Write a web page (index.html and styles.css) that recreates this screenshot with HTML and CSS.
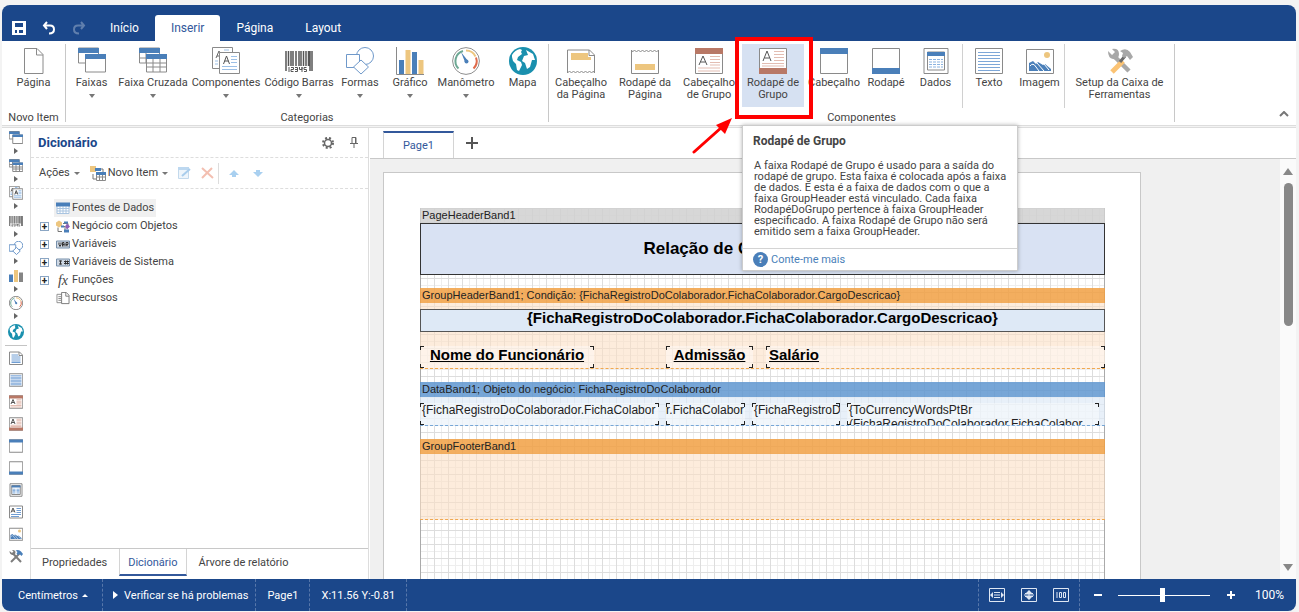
FILE: index.html
```html
<!DOCTYPE html>
<html lang="pt-br">
<head>
  <meta charset="UTF-8" />
  <meta name="viewport" content="width=device-width, initial-scale=1.0" />
  <title>Designer de Relatórios</title>
  <link rel="stylesheet" href="styles.css">
</head>
<body>
  <!-- icons -->
  <svg class="sprite" aria-hidden="true">
    <symbol id="i-page" viewBox="0 0 28 28"><path d="M4.500 1.500h12.500l6 6v19H4.500z M16.500 1.500v6.500h6.500" fill="#fff" stroke="#8a8a8a"/></symbol>
    <symbol id="i-bands" viewBox="0 0 28 28"><path d="M.5 1h20v15H.5z" fill="#fff" stroke="#8a8a8a"/><path d="M0 1h21v5H0z" fill="#4a7fb9"/><path d="M7.500 8h20v17h-20z" fill="#fff" stroke="#8a8a8a"/><path d="M7 7h21v5H7z" fill="#4a7fb9"/></symbol>
    <symbol id="i-cross" viewBox="0 0 28 28"><path d="M.5 1h20v15H.5z M.5 11h20 M7 5v11" fill="#fff" stroke="#8a8a8a"/><path d="M0 1h21v5H0z" fill="#4a7fb9"/><path d="M7.500 8h20v17h-20z M7.500 16h20 M7.500 20h20 M14 12v13 M21 12v13" fill="#fff" stroke="#8a8a8a"/><path d="M7 7h21v5H7z" fill="#4a7fb9"/></symbol>
    <symbol id="i-comps" viewBox="0 0 28 28"><path d="M.5 .5h20v21H.5z" fill="#fff" stroke="#8a8a8a"/><path d="M4 11L7 4l3 7M5 9h4" fill="none" stroke="#666"/><path d="M3 14h3M3 17h3M12 3h5" stroke="#9dc0e6"/><path d="M7.500 5.500h20v21h-20z" fill="#fff" stroke="#8a8a8a"/><path d="M11.500 17l3-8 3 8M12.500 14h4" fill="none" stroke="#555"/><path d="M19 9.500h6M19 12.500h6M19 15.500h6M10 19.500h15M10 22.500h15" stroke="#9dc0e6"/></symbol>
    <symbol id="i-barcode" class="scaled" viewBox="0 0 28 28"><path d="M1 4v20M3.500 4v15M6 4v15M8 4v15M11 4v15M14 4v15M16 4v15M18.500 4v15M21 4v15M23.500 4v15M25 4v20M27 4v20" stroke="#555" stroke-width="1.500"/><path d="M4 20v5M6 20.500h2.500v2H6v2h2.500M10 20.500h2.500v4H10M10 22.500h2.500M14.500 20v2.500h2.500v-2.500v5M21.500 20.500H19v2h2.500v2H19" fill="none" stroke="#555"/></symbol>
    <symbol id="i-shapes" viewBox="0 0 28 28"><circle cx="19" cy="9" r="8.500" fill="#fff" stroke="#6f99ca"/><path d="M.5 7.500h13v13H.5z" fill="#fff" stroke="#6f99ca"/><path d="M15 13l7.500 7-7.500 7-7.500-7z" fill="#fff" stroke="#6f99ca"/></symbol>
    <symbol id="i-chart" viewBox="0 0 28 28"><path d="M.5 0v27.500H28" fill="none" stroke="#8a8a8a"/><path d="M3 13h5v14H3zM16 5h5v22h-5z" fill="#4a7fb9"/><path d="M9.500 3h5v24h-5zM22.500 13h5v14h-5z" fill="#edc67f"/></symbol>
    <symbol id="i-gauge" viewBox="0 0 28 28"><circle cx="14" cy="14" r="13.400" fill="#fff" stroke="#8f8f8f"/><g class="dial" fill="none" stroke-width="2"><path d="M6.500 21.500A10.500 10.500 0 0 1 11 4" stroke="#6da894"/><path d="M14 3.500a10.500 10.500 0 0 1 9.500 6" stroke="#edc67f"/><path d="M24 10.500a10.500 10.500 0 0 1-2.500 11" stroke="#df6b4c"/></g><path d="M9 5l7 9-3 1z" fill="#4a7fb9"/><circle cx="14.500" cy="14.500" r="2" fill="#4a7fb9"/></symbol>
    <symbol id="i-map" viewBox="0 0 28 28"><circle cx="14" cy="14" r="14" fill="#1a90ae"/><path d="M3 8q3-5 8-6l2 1-1 2 1 2-4 3-1 3 4 2 1 3-3 6-2-1-1-6-3-3-1-4zM17 3l7 4 2 6-3 0-2 7-3 2-2-6-3-2 2-5 4-1z" fill="#fff"/></symbol>
    <symbol id="i-phead" viewBox="0 0 28 28"><path d="M.5 26V3h22l5 5v18M22 3v5.500h5.500" fill="#fff" stroke="#8a8a8a"/><path d="M.5 26l2-2 2 2 2-2 2 2 2-2 2 2 2-2 2 2 2-2 2 2 2-2 2 2 2-2 1 2" fill="none" stroke="#8a8a8a"/><path d="M4 6h17v4h3v3H4z" fill="#edc67f"/></symbol>
    <symbol id="i-pfoot" viewBox="0 0 28 28"><path d="M.5 3v23.500h27V3l-2 2-2-2-2 2-2-2-2 2-2-2-2 2-2-2-2 2-2-2-2 2-2-2-2 2z" fill="#fff" stroke="#8a8a8a"/><path d="M4 17h20v6H4z" fill="#edc67f"/></symbol>
    <symbol id="i-ghead" viewBox="0 0 28 28"><path d="M.5 1.500h27v25H.5z" fill="#fff" stroke="#8a8a8a"/><path d="M0 1h28v6H0z" fill="#b87866"/><path d="M4 18l4-9 4 9M5.500 15h5" fill="none" stroke="#555"/><path d="M15 9.500h10M15 12.500h10M15 15.500h10M15 18h10M3 21h22M3 24h22" stroke="#e3bdb2"/></symbol>
    <symbol id="i-gfoot" viewBox="0 0 28 28"><path d="M.5 1.500h27v25H.5z" fill="#fff" stroke="#8a8a8a"/><path d="M0 21h28v6H0z" fill="#b87866"/><path d="M4 14l4-10 4 10M5.500 11h5" fill="none" stroke="#555"/><path d="M15 4.500h10M15 7.500h10M15 10.500h10M15 13.500h10M3 16.500h22M3 19h22" stroke="#e3bdb2"/></symbol>
    <symbol id="i-head" viewBox="0 0 28 28"><path d="M.5 1.500h27v25H.5z" fill="#fff" stroke="#8a8a8a"/><path d="M0 1h28v6H0z" fill="#4a7fb9"/></symbol>
    <symbol id="i-foot" viewBox="0 0 28 28"><path d="M.5 1.500h27v25H.5z" fill="#fff" stroke="#8a8a8a"/><path d="M0 21h28v6H0z" fill="#4a7fb9"/></symbol>
    <symbol id="i-data" viewBox="0 0 28 28"><path d="M2 1.500h24v25H2z" fill="#fff" stroke="#8a8a8a"/><path d="M5.500 5h17v18h-17z" fill="#fff" stroke="#8a8a8a"/><path d="M5 5h18v4H5z" fill="#4a7fb9"/><path d="M7 12.500h14M7 15h14M7 17.500h14M7 20h14" stroke="#8bb3e0" stroke-dasharray="3 1"/></symbol>
    <symbol id="i-text" viewBox="0 0 28 28"><path d="M.5 1.500h27v25H.5z" fill="#fff" stroke="#8a8a8a"/><path d="M3 5.500h22M3 8.500h22M3 11.500h22M3 14.500h22M3 17.500h22M3 20.500h22M3 23.500h22" stroke="#7da7d8"/></symbol>
    <symbol id="i-page-text" viewBox="0 0 28 28"><path d="M1 27V2h20l6 6v19zM20 2v7h7" fill="#fff" stroke="#8a8a8a"/><path d="M5 8h13M5 12h18M5 16h18M5 20h18M5 23h18" stroke="#6f9dd3"/></symbol>
    <symbol id="i-image" viewBox="0 0 28 28"><path d="M.5 2.500h27v24H.5z" fill="#fff" stroke="#8a8a8a"/><circle cx="21" cy="8" r="3" fill="#edc67f"/><path d="M3 24v-8l4-2 3 3 2-2 5 3 2-1 6 5v2z" fill="#4a7fb9"/><path class="dial" d="M4 19q3-4 6 1l3 4M11 16l7 8M18 17l5 6" fill="none" stroke="#fff"/></symbol>
    <symbol id="i-tools" class="scaled" viewBox="0 0 28 28"><path d="M9 10l14 14" stroke="#a8a8a8" stroke-width="4.500"/><path d="M6 25L17 14" stroke="#fbc374" stroke-width="5"/><path d="M14 15l5-6" stroke="#6b6b6b" stroke-width="3"/><path d="M2 4l4 4 3-3-3-3q7-1 7 5t-6 5q-5-1-5-8zM14 4q6-4 10 1l3 5-3 3-3-4-3 2-2-2 1-3z" fill="#a8a8a8"/></symbol>
    <symbol id="i-tools-sm" class="scaled" viewBox="0 0 28 28"><path d="M7 8l17 18" stroke="#7d7d7d" stroke-width="4"/><path d="M4 26L21 9" stroke="#7d7d7d" stroke-width="4"/><path d="M1 4l5 4 3-3-3-3q7-1 7 5t-6 5q-6-1-6-8z" fill="#7d7d7d"/><path d="M13 3q7-3 11 2l4 5-3 4-4-4-3 2-3-3 2-3z" fill="#4a7fb9"/></symbol>
    <symbol id="i-texta" viewBox="0 0 28 28"><path d="M1 2h26v24H1z" fill="#fff" stroke="#8a8a8a"/><path d="M4 15l4-9 4 9M6 12h5" fill="none" stroke="#555"/><path d="M15 7h9M15 11h9M15 15h9M4 19h20M4 23h16" stroke="#6f9dd3"/></symbol>
    <symbol id="i-chart-sm" viewBox="0 0 28 28"><path d="M0 11h8v15H0z" fill="#4a7fb9"/><path d="M10 2h8v24h-8z" fill="#edc67f"/><path d="M20 7h8v19h-8z" fill="#858585"/></symbol>
  </svg>

  <div class="app">
    <header class="topbar">
      <button class="quick" title="Salvar"><svg width="14" height="14" viewBox="0 0 14 14"><path d="M0 0h14v14H0zM3 2v4h8V2zM3 9v3h2V9zM7 9v3h4V9z" fill="#fff" fill-rule="evenodd"/></svg></button>
      <button class="quick" title="Desfazer"><svg width="14" height="14" viewBox="0 0 14 14"><path d="M5 1L2 4.500 5 8M2 4.500h6q4 0 4 4t-5 4" fill="none" stroke="#fff" stroke-width="2"/></svg></button>
      <button class="quick off" title="Refazer"><svg width="14" height="14" viewBox="0 0 14 14"><path d="M9 1l3 3.500L9 8M12 4.500H6q-4 0-4 4t5 4" fill="none" stroke="#fff" stroke-width="2"/></svg></button>
      <nav class="menu">
        <a href="#inicio">Início</a>
        <a href="#inserir" class="active">Inserir</a>
        <a href="#pagina">Página</a>
        <a href="#layout">Layout</a>
      </nav>
    </header>

    <section class="ribbon">
      <div class="group group-new">
        <div class="tools">
          <button class="tool"><svg><use href="#i-page"/></svg>Página</button>
        </div>
        <div class="caption">Novo Item</div>
      </div>
      <div class="group group-cat">
        <div class="tools">
          <button class="tool drop"><svg><use href="#i-bands"/></svg>Faixas</button>
          <button class="tool drop"><svg><use href="#i-cross"/></svg>Faixa Cruzada</button>
          <button class="tool drop"><svg><use href="#i-comps"/></svg>Componentes</button>
          <button class="tool drop"><svg><use href="#i-barcode"/></svg>Código Barras</button>
          <button class="tool drop"><svg><use href="#i-shapes"/></svg>Formas</button>
          <button class="tool drop"><svg><use href="#i-chart"/></svg>Gráfico</button>
          <button class="tool drop"><svg><use href="#i-gauge"/></svg>Manômetro</button>
          <button class="tool"><svg><use href="#i-map"/></svg>Mapa</button>
        </div>
        <div class="caption">Categorias</div>
      </div>
      <div class="group group-comp">
        <div class="tools">
          <button class="tool"><svg><use href="#i-phead"/></svg>Cabeçalho<br>da Página</button>
          <button class="tool"><svg><use href="#i-pfoot"/></svg>Rodapé da<br>Página</button>
          <button class="tool"><svg><use href="#i-ghead"/></svg>Cabeçalho<br>de Grupo</button>
          <div class="hint">
            <button class="tool selected"><svg><use href="#i-gfoot"/></svg>Rodapé de<br>Grupo</button>
            <div class="highlight"></div>
            <svg class="arrow" viewBox="0 0 42 40"><path d="M2 36L30 11" stroke="#f00" stroke-width="3" stroke-linecap="round"/><path d="M40 2L24 9l9 9z" fill="#f00"/></svg>
            <div class="tooltip">
              <h4>Rodapé de Grupo</h4>
              <p>A faixa Rodapé de Grupo é usado para a saída do<br>rodapé de grupo. Esta faixa é colocada após a faixa<br>de dados. E esta é a faixa de dados com o que a<br>faixa GroupHeader está vinculado. Cada faixa<br>RodapéDoGrupo pertence à faixa GroupHeader<br>especificado. A faixa Rodapé de Grupo não será<br>emitido sem a faixa GroupHeader.</p>
              <a href="#ajuda"><span class="help">?</span>Conte-me mais</a>
            </div>
          </div>
          <button class="tool"><svg><use href="#i-head"/></svg>Cabeçalho</button>
          <button class="tool"><svg><use href="#i-foot"/></svg>Rodapé</button>
          <button class="tool split"><svg><use href="#i-data"/></svg>Dados</button>
          <button class="tool"><svg><use href="#i-text"/></svg>Texto</button>
          <button class="tool split"><svg><use href="#i-image"/></svg>Imagem</button>
          <button class="tool"><svg><use href="#i-tools"/></svg>Setup da Caixa de<br>Ferramentas</button>
        </div>
        <div class="caption">Componentes</div>
      </div>
      <button class="collapse" title="Recolher"><svg width="10" height="6" viewBox="0 0 10 6"><path d="M1 5l4-4 4 4" fill="none" stroke="#777" stroke-width="2"/></svg></button>
    </section>

    <main>
      <nav class="toolbox">
        <div class="boxes">
          <button><svg><use href="#i-bands"/></svg></button>
          <button><svg><use href="#i-cross"/></svg></button>
          <button><svg><use href="#i-comps"/></svg></button>
          <button><svg><use href="#i-barcode"/></svg></button>
          <button><svg><use href="#i-shapes"/></svg></button>
          <button><svg><use href="#i-chart-sm"/></svg></button>
          <button><svg><use href="#i-gauge"/></svg></button>
          <button class="plain"><svg><use href="#i-map"/></svg></button>
        </div>
        <div class="singles">
          <button><svg><use href="#i-page-text"/></svg></button>
          <button><svg><use href="#i-text"/></svg></button>
          <button><svg><use href="#i-ghead"/></svg></button>
          <button><svg><use href="#i-gfoot"/></svg></button>
          <button><svg><use href="#i-head"/></svg></button>
          <button><svg><use href="#i-foot"/></svg></button>
          <button><svg><use href="#i-data"/></svg></button>
          <button><svg><use href="#i-texta"/></svg></button>
          <button><svg><use href="#i-image"/></svg></button>
          <button><svg><use href="#i-tools-sm"/></svg></button>
        </div>
      </nav>

      <aside class="panel">
        <div class="panel-head">
          <h2>Dicionário</h2>
          <button title="Configurações"><svg width="12" height="12" viewBox="0 0 12 12"><circle cx="6" cy="6" r="5" fill="none" stroke="#666" stroke-width="2" stroke-dasharray="2 2"/><circle cx="6" cy="6" r="3.500" fill="none" stroke="#666" stroke-width="1.500"/></svg></button>
          <button title="Fixar"><svg width="8" height="11" viewBox="0 0 8 11"><path d="M2 .5h4v6H2zM0 6.500h8M4 7v4M5.500 1v5" fill="none" stroke="#666"/></svg></button>
        </div>
        <div class="panel-bar">
          <button>Ações<i class="down"></i></button>
          <button class="new"><svg width="16" height="15" viewBox="0 0 16 15"><path d="M0 0h6v6H0z" fill="#edc67f"/><path d="M3 8v5h3M8 3h5v3" fill="none" stroke="#777"/><path d="M6.500 7h9v7.500h-9zM6.500 11h9M9.500 9v5M12.500 9v5" fill="#fff" stroke="#8a8a8a"/><path d="M5 2h6v3H5zM6 6h10v3H6z" fill="#4a7fb9"/></svg>Novo Item<i class="down"></i></button>
          <button class="off"><svg width="13" height="12" viewBox="0 0 13 12"><path d="M.5 1.500h10v10H.5z" fill="#eef5fb" stroke="#c3d9ec"/><path d="M0 0h11v3H0z" fill="#bdd8f0"/><path d="M4 9l8-7" stroke="#a9cdec" stroke-width="2"/></svg></button>
          <button class="off del"><svg width="13" height="12" viewBox="0 0 13 12"><path d="M1 1l11 10M11 1L1 11" stroke="#f3bfb1" stroke-width="2"/></svg></button>
          <button class="off move"><svg width="10" height="7" viewBox="0 0 10 7"><path d="M5 0l5 5H7v2H3V5H0z" fill="#a9d0f0"/></svg></button>
          <button class="off move"><svg width="10" height="7" viewBox="0 0 10 7"><path d="M5 7l5-5H7V0H3v2H0z" fill="#a9d0f0"/></svg></button>
        </div>
        <ul class="tree">
          <li><span class="node current"><svg viewBox="0 0 14 12"><path d="M1 1h12v10H1zM1 6h12M1 8.500h12M4 4v7M7 4v7M10 4v7" fill="#fff" stroke="#a9c4e0"/><path d="M0 0h14v4H0z" fill="#4a7fb9"/></svg>Fontes de Dados</span></li>
          <li><button class="plus">+</button><span class="node"><svg viewBox="0 0 14 12"><path d="M2 7v4h4M7 3h5v3M6 6h3v5" fill="none" stroke="#777"/><path d="M0 2l3-2 3 2v3L3 7 0 5z" fill="#edc67f"/><path d="M8 1h4v2H8zM5 5h3v2H5z" fill="#4a7fb9"/><path d="M11 3l3 3-3 3-2-3z" fill="#8e5fb8"/><path d="M8 9h5v3H8z" fill="#4a7fb9"/></svg>Negócio com Objetos</span></li>
          <li><button class="plus">+</button><span class="node"><svg viewBox="0 0 14 12"><path d="M.5 2.500h13v7H.5z" fill="#cfd9e5" stroke="#7790ab"/><path d="M3 4v2l1 2 1-2V4M6.500 8V4h1.500v4M6.500 6h2M10 8V4h2v2h-2l2 2" fill="none" stroke="#333"/></svg>Variáveis</span></li>
          <li><button class="plus">+</button><span class="node"><svg viewBox="0 0 14 12"><path d="M.5 2.500h13v7H.5z" fill="#cfd9e5" stroke="#7790ab"/><path d="M3 4.500h3M3 7.500h3M4.500 4v4M8 5h5M8 7h5M9.500 4v4M11.500 4v4" fill="none" stroke="#333"/></svg>Variáveis de Sistema</span></li>
          <li><button class="plus">+</button><span class="node"><em>fx</em>Funções</span></li>
          <li><span class="node"><svg viewBox="0 0 14 14"><path d="M.5 2.500h7v9h-7zM2 5h3M2 7h3M2 9h3" fill="#fff" stroke="#8a8a8a"/><path d="M5.500 .5h5l3 3v9h-8zM10 .5v4h3.500" fill="#fff" stroke="#777"/></svg>Recursos</span></li>
        </ul>
        <nav class="panel-tabs">
          <a href="#propriedades">Propriedades</a>
          <a href="#dicionario" class="active">Dicionário</a>
          <a href="#arvore">Árvore de relatório</a>
        </nav>
      </aside>

      <section class="designer">
        <div class="page-tabs">
          <a href="#page1">Page1</a>
          <button title="Nova página"><svg width="12" height="12" viewBox="0 0 12 12"><path d="M6 0v12M0 6h12" stroke="#555" stroke-width="2"/></svg></button>
        </div>
        <div class="canvas">
          <div class="paper">
            <div class="sheet">
              <div class="band-title gray">PageHeaderBand1</div>
              <div class="report-title">Relação de Cargos e Salários</div>

              <div class="band orange first">
                <div class="band-title">GroupHeaderBand1; Condição: {FichaRegistroDoColaborador.FichaColaborador.CargoDescricao}</div>
                <div class="band-body">
                  <div class="group-title">{FichaRegistroDoColaborador.FichaColaborador.CargoDescricao}</div>
                  <div class="fields heads">
                    <div class="field center">Nome do Funcionário</div>
                    <div class="field center">Admissão</div>
                    <div class="field">Salário</div>
                  </div>
                </div>
              </div>

              <div class="band blue">
                <div class="band-title">DataBand1; Objeto do negócio: FichaRegistroDoColaborador</div>
                <div class="band-body fields values">
                  <div class="field">{FichaRegistroDoColaborador.FichaColabor</div>
                  <div class="field middle">r.FichaColabor</div>
                  <div class="field">{FichaRegistroD</div>
                  <div class="field">{ToCurrencyWordsPtBr<br>(FichaRegistroDoColaborador.FichaColabor</div>
                </div>
              </div>

              <div class="band orange">
                <div class="band-title">GroupFooterBand1</div>
                <div class="band-body empty"></div>
              </div>
            </div>
          </div>
          <div class="scroll"><i class="up"></i><div class="thumb"></div><i class="dn"></i></div>
        </div>
      </section>
    </main>

    <footer class="status">
      <button class="units">Centímetros<i class="up-sm"></i></button>
      <button class="check"><i class="play"></i>Verificar se há problemas</button>
      <span class="cell">Page1</span>
      <span class="cell">X:11.56 Y:-0.81</span>
      <div class="views">
        <button title="Largura"><svg width="16" height="14" viewBox="0 0 16 14"><path d="M.5 .5h15v13H.5zM5 4.500h6M5 7h6M5 9.500h6" fill="none" stroke="#dfe7f3"/><path d="M4 4v6L1 7zM12 4v6l3-3z" fill="#dfe7f3"/></svg></button>
        <button title="Página inteira"><svg width="16" height="14" viewBox="0 0 16 14"><path d="M.5 .5h15v13H.5zM3 7h10M4 5.500h8M4 8.500h8M8 4v6" fill="none" stroke="#dfe7f3"/><path d="M5 5h6L8 2zM5 9h6l-3 3z" fill="#dfe7f3"/></svg></button>
        <button title="Tamanho real"><svg width="16" height="14" viewBox="0 0 16 14"><path d="M.5 .5h15v13H.5zM4 4v6M6.500 4.500h2v5h-2zM10.500 4.500h2v5h-2z" fill="none" stroke="#dfe7f3"/></svg></button>
      </div>
      <div class="zoom">
        <button class="less" title="Diminuir"><svg width="8" height="8" viewBox="0 0 8 8"><path d="M0 4h8" stroke="#fff" stroke-width="2"/></svg></button>
        <input type="range" min="0" max="200" value="96" aria-label="Zoom">
        <button class="more" title="Aumentar"><svg width="8" height="8" viewBox="0 0 8 8"><path d="M0 4h8M4 0v8" stroke="#fff" stroke-width="2"/></svg></button>
        <span>100%</span>
      </div>
    </footer>
  </div>
</body>
</html>
```
FILE: styles.css
```css
:root {
  --blue: #1b478a;
  --accent: #4a7fb9;
  --text: #444;
  --line: #d4d4d4;
  --data: #76a6d6;
}
* { box-sizing: border-box; }
body {
  margin: 0; background: #f3f3f3; color: var(--text);
  font: 11px/14px Roboto, "Noto Sans", sans-serif;
}
button {
  margin: 0; padding: 0; border: 0; background: none;
  font: inherit; color: inherit; cursor: pointer;
}
a { color: inherit; text-decoration: none; }
svg { display: block; }
.sprite { position: absolute; width: 0; height: 0; }
/* keep 1px outlines when an icon is drawn small */
symbol path, symbol circle { vector-effect: non-scaling-stroke; }
.scaled path, .dial, .dial path { vector-effect: none; }
.app {
  display: flex; flex-direction: column; height: 100vh;
  padding: 5px 3px 1px 2px;
}

/* top bar */
.topbar {
  display: flex; align-items: flex-end; flex: none; height: 36px;
  padding-left: 9px; background: var(--blue); color: #fff;
  border-radius: 8px 8px 0 0;
}
.quick { display: flex; align-items: center; justify-content: center; width: 30px; height: 26px; padding-right: 14px; }
.quick.off { opacity: .3; }
.menu { display: flex; margin-left: -7px; font-size: 12px; }
.menu a { height: 26px; padding: 0 16px; line-height: 26px; }
.menu a.active { background: #fff; color: #33589b; border-radius: 3px 3px 0 0; }

/* ribbon */
.ribbon {
  display: flex; flex: none; height: 85px; position: relative;
  background: #fff; border-bottom: 1px solid #ddd;
}
.group {
  display: flex; flex-direction: column; justify-content: space-between;
  margin: 3px 0; border-right: 1px solid #c8c8c8; text-align: center;
}
.tools { display: grid; height: 64px; }
.group-new .tools { grid-template-columns: 63px; }
.group-cat .tools { grid-template-columns: 51px 72px 74px 72px 50px 50px 62px 51px; }
.group-comp .tools { grid-template-columns: 64px 64px 64px 64px 58px 46px 54px 52px 50px 109px; }
.tool {
  display: flex; flex-direction: column; align-items: center;
  padding-top: 3px; line-height: 12px; white-space: nowrap;
}
.tool svg { flex: none; width: 28px; height: 28px; margin-bottom: 2px; }
.tool.drop::after {
  content: ""; margin-top: 5px;
  border: 3px solid transparent; border-top: 4px solid #777; border-bottom: 0;
}
.tool.split { border-right: 1px solid #d0d0d0; }
.tool.selected { width: 62px; height: 63px; background: #d6e1f2; }
.caption { line-height: 8px; }
.collapse { position: absolute; right: 7px; bottom: 8px; }

.hint { position: relative; padding-left: 1px; }
.highlight {
  position: absolute; z-index: 4; left: -6px; top: -7px; width: 78px; height: 82px;
  border: 4px solid #f00;
}
.arrow { position: absolute; z-index: 4; left: -49px; top: 72px; width: 42px; height: 40px; }
.tooltip {
  position: absolute; z-index: 3; left: 1px; top: 81px; width: 276px;
  background: #fff; border: 1px solid #ccc; box-shadow: 0 0 4px rgba(0,0,0,.3);
  text-align: left;
}
.tooltip h4 { margin: 0; padding: 7px 10px; font-size: 12px; line-height: 16px; }
.tooltip p { margin: 0; padding: 4px 11px 11px; line-height: 11px; white-space: nowrap; }
.tooltip a {
  display: flex; align-items: center; gap: 3px; height: 22px; padding: 0 10px;
  border-top: 1px solid var(--line); color: var(--accent);
}
.help {
  width: 15px; height: 15px; border-radius: 50%; background: var(--accent);
  color: #fff; font-weight: bold; line-height: 15px; text-align: center;
}

main { display: flex; flex: 1; min-height: 0; margin-top: 1px; background: #fff; border-top: 1px solid #ddd; }

/* left tool strip */
.toolbox { flex: none; width: 29px; padding: 2px 3px 0; border-right: 1px solid #ddd; overflow: hidden; }
.toolbox button { display: flex; flex-direction: column; align-items: center; width: 22px; height: 22px; padding-top: 5px; }
.toolbox svg { flex: none; width: 14px; height: 14px; }
.boxes { padding-bottom: 6px; border-bottom: 1px solid #c4c4c4; }
.toolbox .boxes button { height: 27px; padding-top: 1px; }
.toolbox .boxes button:nth-child(odd) { height: 28px; }
.boxes button::after {
  content: ""; margin-top: 3px;
  border: 3px solid transparent; border-left: 4px solid #666; border-right: 0;
}
.toolbox .boxes button.plain { height: 16px; }
.boxes .plain svg { width: 16px; height: 16px; }
.boxes .plain::after { display: none; }

/* dictionary */
.panel { display: flex; flex-direction: column; flex: none; width: 338px; border-right: 1px solid #ddd; }
.panel-head { display: flex; align-items: center; gap: 16px; height: 30px; padding: 0 10px 0 7px; border-bottom: 1px dashed #ddd; }
.panel-head h2 { flex: 1; margin: 0; font-size: 13px; color: var(--blue); }
.panel-bar { display: flex; align-items: center; height: 31px; padding-left: 8px; border-bottom: 1px dashed #ddd; }
.panel-bar button { display: flex; align-items: center; margin-right: 10px; }
.panel-bar .new svg { margin-right: 2px; }
.panel-bar .del { height: 21px; padding-right: 4px; border-right: 1px solid #ddd; }
.panel-bar .move { margin-right: 14px; }
.down { margin-left: 4px; border: 3px solid transparent; border-top: 3px solid #777; border-bottom: 0; }
.tree { flex: 1; margin: 0; padding: 10px 0 0 9px; list-style: none; }
.tree li { display: flex; align-items: center; height: 18px; }
.plus {
  width: 9px; height: 9px; border: 1px solid #8ba6c4; color: #222;
  font-size: 10px; line-height: 7px; font-weight: bold;
}
.node { display: flex; align-items: center; height: 18px; padding: 0 2px; margin-left: 5px; }
.node:first-child { margin-left: 14px; }
.node svg, .node em { width: 14px; height: 13px; margin-right: 2px; }
.node em { font: italic 14px/13px "Liberation Serif", serif; text-align: center; }
.node.current { background: #f0f0f0; }
.panel-tabs { display: flex; height: 31px; border-top: 1px solid #c8c8c8; }
.panel-tabs a { height: 27px; padding: 0 11px; line-height: 27px; }
.panel-tabs .active { margin: 0 1px; padding: 0 8px; border: 1px solid var(--line); border-top: 0; border-bottom: 2px solid #33589b; color: #33589b; }

/* report canvas */
.designer { display: flex; flex-direction: column; flex: 1; min-width: 0; padding-left: 1px; }
.page-tabs { display: flex; align-items: flex-end; flex: none; height: 31px; padding-left: 13px; border-bottom: 1px solid #c8c8c8; }
.page-tabs a {
  width: 71px; height: 27px; border: 1px solid var(--line); border-top: 2px solid #33589b; border-bottom: 0;
  color: #33589b; line-height: 25px; text-align: center;
}
.page-tabs button { padding: 0 12px 9px; }
.canvas { display: flex; justify-content: space-between; flex: 1; min-height: 0; overflow: hidden; background: #f0f0f0; }
.paper { flex: none; width: 758px; margin: 13px 0 0 13px; padding: 35px 35px 0 36px; background: #fff; border: 1px solid #c8c8c8; border-bottom: 0; }
.sheet {
  height: 800px; box-shadow: inset 1px 0 #aaa, inset -1px 0 #aaa; color: #222;
  font: 11px/15px "Liberation Sans", Arial, sans-serif;
  background:
    linear-gradient(to right, #ddd 1px, transparent 1px) 0 0 / 14px 14px,
    linear-gradient(to bottom, #ddd 1px, transparent 1px) 0 0 / 14px 14px,
    linear-gradient(to right, #eee 1px, transparent 1px) 0 0 / 7px 7px,
    linear-gradient(to bottom, #eee 1px, transparent 1px) 0 0 / 7px 7px,
    #fff;
}
.band-title { height: 15px; padding-left: 2px; white-space: nowrap; }
.gray { background: rgba(208,208,208,.85); }
.report-title {
  height: 52px; border: 1px solid #333; background: #d9e2f3; color: #000;
  font-size: 17px; font-weight: bold; line-height: 50px; text-align: center;
}
.band { margin-top: 13px; }
.orange .band-title { background: rgba(241,160,67,.85); }
.orange .band-body { background: rgba(251,224,196,.6); border: 1px dashed #f0a850; border-width: 0 0 1px; }
.blue .band-title { background: rgba(95,151,208,.85); }
.blue .band-body { background: rgba(222,234,247,.7); border-bottom: 1px dashed var(--data); }
.first .band-body { height: 66px; padding-top: 6px; }
.group-title {
  height: 23px; border: 1px solid #555; background: #dee9f6; color: #000;
  font-size: 15px; font-weight: bold; line-height: 16px; text-align: center;
}
.fields { display: grid; }
.heads {
  grid-template-columns: 174px 72px 87px 13px 1fr; height: 22px; margin-top: 14px;
  color: #000; font-size: 15px; font-weight: bold; text-decoration: underline; line-height: 18px;
}
.heads .field:nth-child(2) { grid-column: 3; }
.heads .field:nth-child(3) { grid-column: 5; padding-left: 3px; }
.values { grid-template-columns: 239px 79px 88px 252px; column-gap: 7px; height: 29px; padding-top: 6px; font-size: 12px; line-height: 14px; }
.field {
  overflow: hidden; padding-left: 2px; white-space: nowrap;
  --c: linear-gradient(#222, #222);
  background:
    var(--c) 0 0 / 4px 1px, var(--c) 0 0 / 1px 4px,
    var(--c) 100% 0 / 4px 1px, var(--c) 100% 0 / 1px 4px,
    var(--c) 0 100% / 4px 1px, var(--c) 0 100% / 1px 4px,
    var(--c) 100% 100% / 4px 1px, var(--c) 100% 100% / 1px 4px,
    rgba(255,255,255,.4);
  background-repeat: no-repeat;
}
.center { text-align: center; padding-left: 0; }
.middle { padding-left: 0; }
.empty { height: 66px; }

.scroll { display: flex; flex-direction: column; align-items: center; flex: none; width: 16px; padding: 9px 0 8px; background: #fafafa; }
.scroll i { border: 5px solid transparent; }
.scroll .up { border-bottom: 7px solid #888; border-top: 0; }
.scroll .dn { border-top: 7px solid #888; border-bottom: 0; }
.thumb { width: 9px; height: 143px; margin: 8px 0 auto; border-radius: 5px; background: #888; }

/* status bar */
.status {
  display: flex; align-items: stretch; flex: none; height: 32px;
  background: var(--blue); color: #fff; border-radius: 0 0 8px 8px;
}
.status button { display: flex; align-items: center; }
.status .units, .status .check, .cell { border-right: 1px dashed #5777aa; line-height: 33px; }
.status .units { padding: 0 14px 0 16px; }
.status .check { padding: 0 7px 0 10px; }
.cell { padding: 0 11px; }
.up-sm { margin-left: 4px; border: 3px solid transparent; border-bottom: 3px solid #fff; border-top: 0; }
.play { margin-right: 6px; border: 4px solid transparent; border-left: 5px solid #fff; border-right: 0; }
.views { display: flex; align-items: center; gap: 16px; margin-left: auto; padding: 0 10px; border: dashed #5777aa; border-width: 0 1px; }
.zoom { display: flex; align-items: center; padding: 0 12px 0 14px; }
.zoom input {
  width: 92px; height: 14px; margin: 0 17px 0 16px; appearance: none; -webkit-appearance: none;
  background: linear-gradient(#fff, #fff) center / 100% 1px no-repeat;
}
.zoom input::-webkit-slider-thumb { -webkit-appearance: none; width: 5px; height: 14px; background: #fff; }
.zoom span { margin-left: 20px; font-size: 12px; }
```
